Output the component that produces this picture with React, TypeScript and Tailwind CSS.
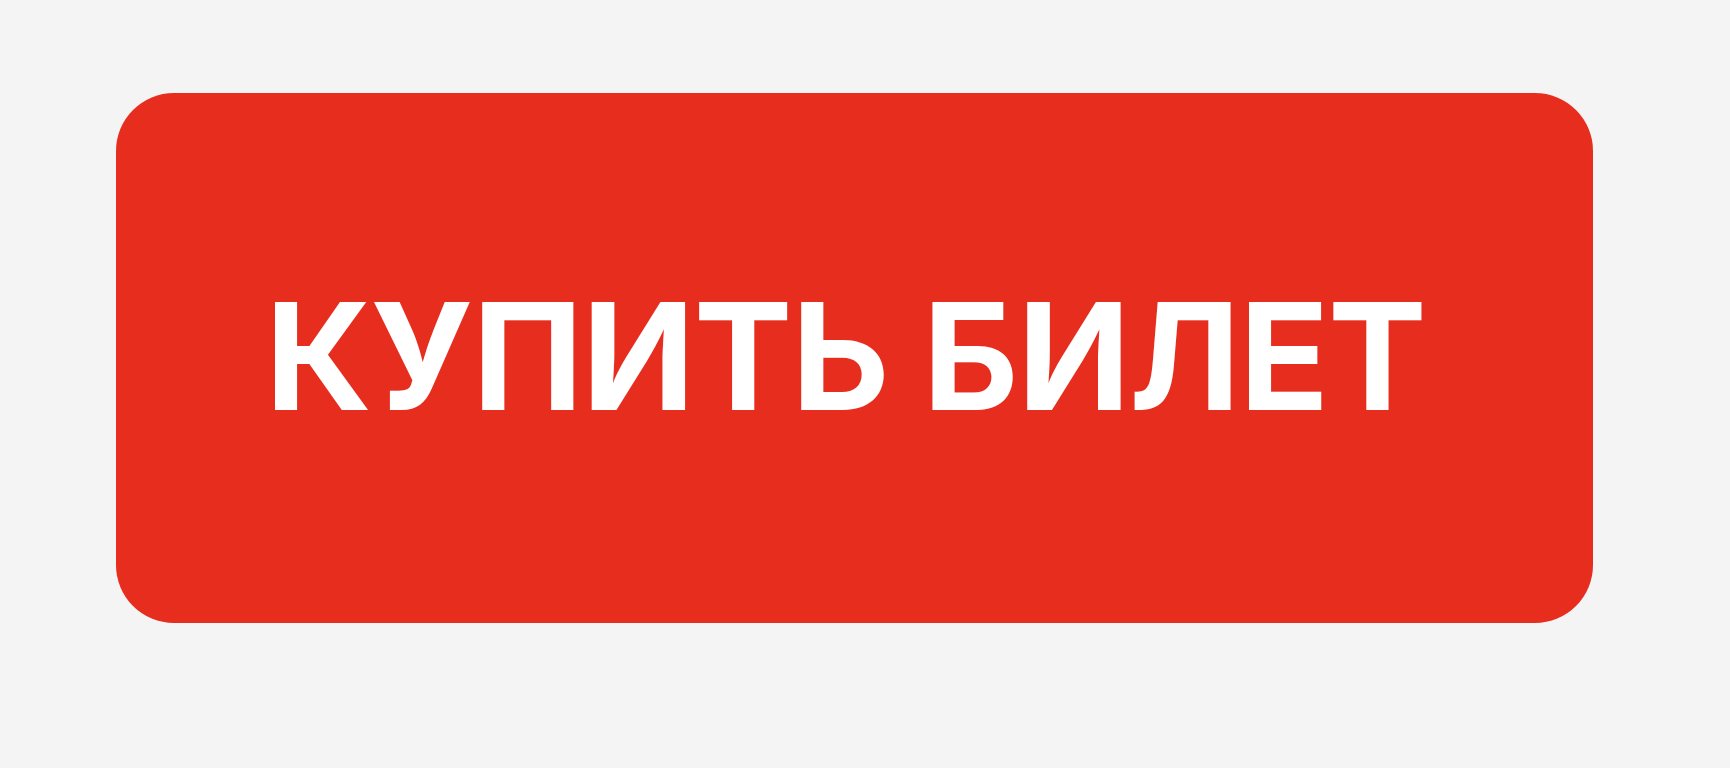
export default function App() {
  return (
    <div className="relative w-[1730px] h-[768px] bg-[#f4f4f4] grid grid-cols-[116px_1477px_1fr] grid-rows-[93px_530px_1fr]">
      {/* Call-to-action button */}
      <div className="col-start-2 row-start-2 rounded-[58px] bg-[#e72d1e] flex items-center justify-center pr-[18px] pb-[2px]">
        <span className="text-[148px] leading-none font-bold text-white tracking-[-1px] whitespace-nowrap font-['Inter']">
          КУПИТЬ БИЛЕТ
        </span>
      </div>
    </div>
  );
}
